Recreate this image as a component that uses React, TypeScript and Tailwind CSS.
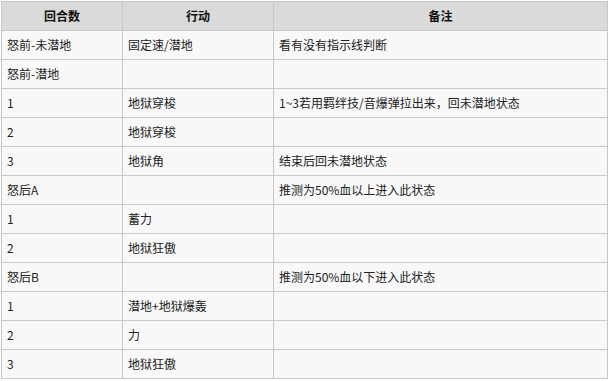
const rows: [string, string, string][] = [
  ['怒前-未潜地', '固定速/潜地', '看有没有指示线判断'],
  ['怒前-潜地', '', ''],
  ['1', '地狱穿梭', '1~3若用羁绊技/音爆弹拉出来，回未潜地状态'],
  ['2', '地狱穿梭', ''],
  ['3', '地狱角', '结束后回未潜地状态'],
  ['怒后A', '', '推测为50%血以上进入此状态'],
  ['1', '蓄力', ''],
  ['2', '地狱狂傲', ''],
  ['怒后B', '', '推测为50%血以下进入此状态'],
  ['1', '潜地+地狱爆轰', ''],
  ['2', '力', ''],
  ['3', '地狱狂傲', ''],
];

export default function App() {
  return (
    <div
      className="w-[609px] h-[381px] bg-white pl-px pt-px text-[12px] text-[#222]"
      style={{ fontFamily: '"Noto Sans CJK SC", "Noto Sans", sans-serif' }}
    >
      <table className="w-[607px] table-fixed border-collapse bg-[#f8f8f8]">
        <colgroup>
          <col className="w-[121px]" />
          <col className="w-[151px]" />
          <col />
        </colgroup>
        <thead>
          <tr className="h-[29px] bg-[#dadada] font-bold text-[#111]">
            <th className="border border-[#c8c8c8] px-[5px] text-center">回合数</th>
            <th className="border border-[#c8c8c8] px-[5px] text-center">行动</th>
            <th className="border border-[#c8c8c8] px-[5px] text-center">备注</th>
          </tr>
        </thead>
        <tbody>
          {rows.map(([a, b, c], i) => (
            <tr key={i} className="h-[29px]">
              <td className="border border-[#c8c8c8] px-[5px]">{a}</td>
              <td className="border border-[#c8c8c8] px-[5px]">{b}</td>
              <td className="border border-[#c8c8c8] px-[5px]">{c}</td>
            </tr>
          ))}
        </tbody>
      </table>
    </div>
  );
}
